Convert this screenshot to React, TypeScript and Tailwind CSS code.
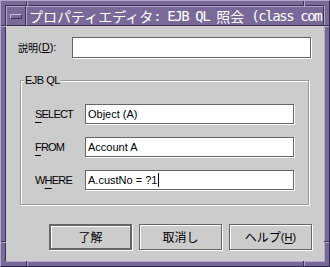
import React from "react";

const sans = "font-['Liberation_Sans',Arial,sans-serif]";
const jp = "font-['Noto_Sans_CJK_JP',sans-serif]";

function Field({ className, children }: { className: string; children?: React.ReactNode }) {
  return (
    <div
      className={`flex items-center bg-white border border-[#666666] shadow-[1px_1px_0_#ffffff] pl-[2px] text-[11px] text-black ${sans} ${className}`}
    >
      {children}
    </div>
  );
}

function Button({ children, isDefault }: { children: React.ReactNode; isDefault?: boolean }) {
  return (
    <div
      className={`w-[83px] h-[26px] flex items-center justify-center bg-[#cccccc] shadow-[inset_1px_1px_0_#ffffff,1px_1px_0_#ffffff] text-black ${
        isDefault ? "border-2 border-[#666666]" : "border border-[#666666]"
      }`}
    >
      {children}
    </div>
  );
}

function Row({ label, value, caret }: { label: React.ReactNode; value: string; caret?: boolean }) {
  return (
    <div className="flex items-center h-[20px]">
      <div className={`w-[50px] text-[11px] tracking-[-0.8px] text-black ${sans}`}>{label}</div>
      <Field className="w-[209px] h-[20px]">
        <span className="whitespace-pre">{value}</span>
        {caret && <span className="ml-[1px] w-[1px] h-[14px] bg-black" />}
      </Field>
    </div>
  );
}

export default function App() {
  return (
    <div className="relative w-[330px] h-[267px] bg-[#776a98] border border-t-[#b0a6cb] border-l-[#b0a6cb] border-b-[#2f2842] border-r-[#2f2842] p-[4px] overflow-hidden">
      <div className="w-full h-full flex flex-col border border-t-[#3b3350] border-l-[#3b3350] border-b-[#b0a6cb] border-r-[#b0a6cb]">
        {/* Title bar */}
        <div className="flex h-[20px] shrink-0">
          <div className="w-[20px] h-full flex items-center justify-center border border-t-[#b0a6cb] border-l-[#b0a6cb] border-b-[#3b3350] border-r-[#3b3350]">
            <div className="w-[12px] h-[5px] border border-t-[#c8c0de] border-l-[#c8c0de] border-b-[#3b3350] border-r-[#3b3350]" />
          </div>
          <div className="flex-1 h-full flex items-center overflow-hidden pl-[2px] border border-t-[#b0a6cb] border-l-[#b0a6cb] border-b-[#3b3350] border-r-[#3b3350] text-white whitespace-nowrap">
            <span className={`${jp} text-[14px] leading-none`}>プロパティエディタ</span>
            <span className="font-['DejaVu_Sans_Mono',monospace] text-[14px] tracking-[-1.43px] leading-none whitespace-pre">: EJB QL </span>
            <span className={`${jp} text-[14px] leading-none`}>照会</span>
            <span className="font-['DejaVu_Sans_Mono',monospace] text-[14px] tracking-[-1.43px] leading-none whitespace-pre"> (class com</span>
          </div>
        </div>

        {/* Content */}
        <div className="flex-1 bg-[#cccccc] flex flex-col pt-[11px]">
          <div className="flex items-center h-[21px] pl-[12px]">
            <div className="w-[54px] flex items-center text-black">
              <span className={`${jp} text-[10px]`}>説明</span>
              <span className={`${sans} text-[11px]`}>
                (<span className="underline underline-offset-[1px]">D</span>):
              </span>
            </div>
            <Field className="w-[239px] h-[21px]" />
          </div>

          <div className="relative mt-[22px] ml-[14px] w-[289px] h-[125px] border border-[#999999] shadow-[1px_1px_0_#ffffff,inset_1px_1px_0_#ffffff] pl-[14px] pt-[23px] flex flex-col gap-[13px]">
            <span className={`absolute left-[3px] top-[-8px] px-[1px] bg-[#cccccc] text-[11px] tracking-[-0.5px] text-black leading-[14px] ${sans}`}>
              EJB QL
            </span>
            <Row
              label={
                <>
                  <span className="underline underline-offset-[4px]">S</span>ELECT
                </>
              }
              value="Object (A)"
            />
            <Row
              label={
                <>
                  <span className="underline underline-offset-[4px]">F</span>ROM
                </>
              }
              value="Account A"
            />
            <Row
              label={
                <>
                  W<span className="underline underline-offset-[4px]">H</span>ERE
                </>
              }
              value="A.custNo = ?1"
              caret
            />
          </div>

          <div className="flex mt-[19px] ml-[43px] gap-[7px]">
            <Button isDefault>
              <span className={`${jp} text-[12px]`}>了解</span>
            </Button>
            <Button>
              <span className={`${jp} text-[12px]`}>取消し</span>
            </Button>
            <Button>
              <span className={`${jp} text-[12px]`}>ヘルプ</span>
              <span className={`${sans} text-[11px]`}>
                (<span className="underline underline-offset-[2px]">H</span>)
              </span>
            </Button>
          </div>
        </div>
      </div>

      {/* frame corner ticks */}
      <div className="absolute left-[25px] top-0 w-[1px] h-[5px] bg-[#3b3350]" />
      <div className="absolute left-[26px] top-0 w-[1px] h-[5px] bg-[#b0a6cb]" />
      <div className="absolute left-[302px] top-0 w-[1px] h-[5px] bg-[#3b3350]" />
      <div className="absolute left-[303px] top-0 w-[1px] h-[5px] bg-[#b0a6cb]" />
      <div className="absolute left-0 top-[24px] w-[5px] h-[1px] bg-[#3b3350]" />
      <div className="absolute left-0 top-[25px] w-[5px] h-[1px] bg-[#b0a6cb]" />
      <div className="absolute right-0 top-[24px] w-[5px] h-[1px] bg-[#3b3350]" />
      <div className="absolute right-0 top-[25px] w-[5px] h-[1px] bg-[#b0a6cb]" />
      <div className="absolute left-0 top-[240px] w-[5px] h-[1px] bg-[#3b3350]" />
      <div className="absolute left-0 top-[241px] w-[5px] h-[1px] bg-[#b0a6cb]" />
      <div className="absolute right-0 top-[240px] w-[5px] h-[1px] bg-[#3b3350]" />
      <div className="absolute right-0 top-[241px] w-[5px] h-[1px] bg-[#b0a6cb]" />
      <div className="absolute left-[25px] bottom-0 w-[1px] h-[5px] bg-[#3b3350]" />
      <div className="absolute left-[26px] bottom-0 w-[1px] h-[5px] bg-[#b0a6cb]" />
      <div className="absolute left-[302px] bottom-0 w-[1px] h-[5px] bg-[#3b3350]" />
      <div className="absolute left-[303px] bottom-0 w-[1px] h-[5px] bg-[#b0a6cb]" />
    </div>
  );
}
